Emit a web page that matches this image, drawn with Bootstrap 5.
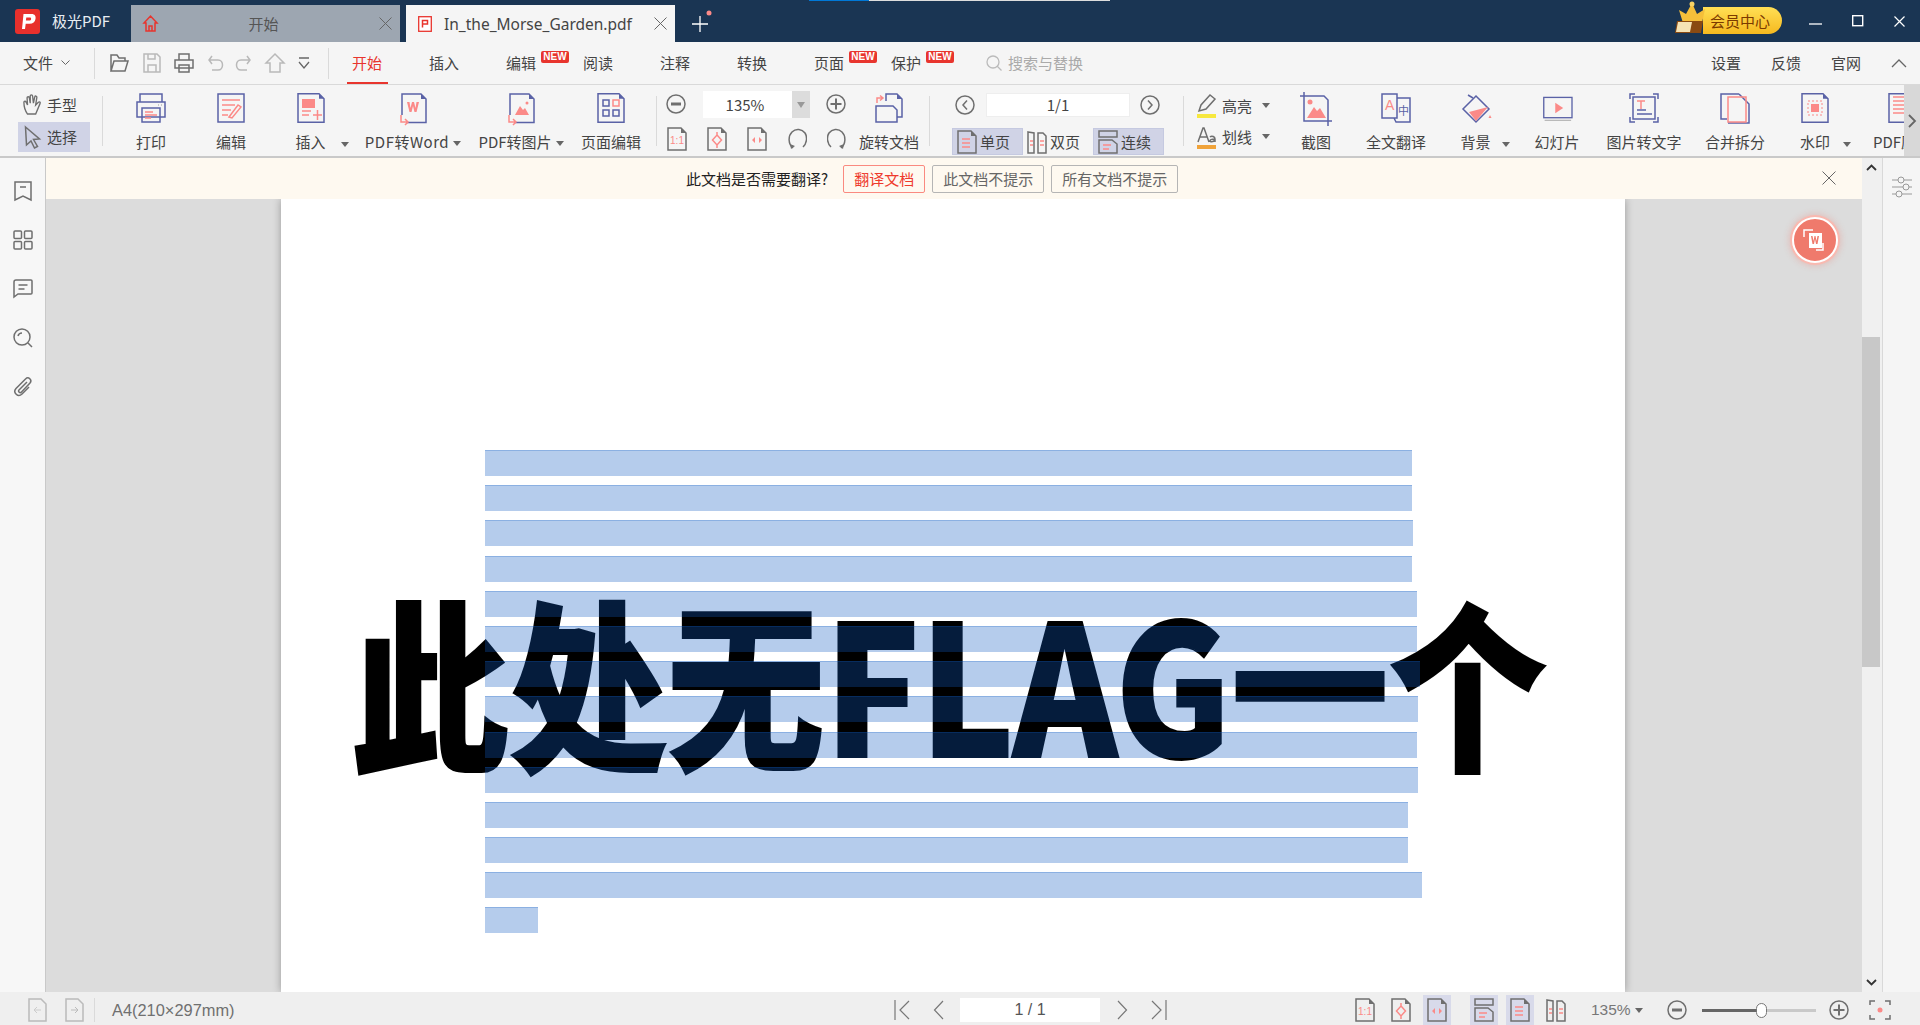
<!DOCTYPE html>
<html lang="zh-CN">
<head>
    <meta charset="UTF-8">
    <meta name="viewport" content="width=device-width, initial-scale=1.0">
    <title>极光PDF</title>
    <link rel="stylesheet" href="https://cdn.jsdelivr.net/npm/bootstrap@5.3.0/dist/css/bootstrap.min.css">
    <style>
        html, body { height: 100%; overflow: hidden; }
        body { font-family: "Noto Sans CJK SC", "Noto Sans", sans-serif; font-size: 15px; color: #444; background: #f5f5f5; line-height: 20px; }
        svg { display: block; flex: none; overflow: visible; }
        .s-n { fill: none; stroke: #5a62a6; stroke-width: 1.5; }
        .s-p { fill: none; stroke: #fb8a88; stroke-width: 1.5; }
        .s-g { fill: none; stroke: #6f6f6f; stroke-width: 1.5; }
        .s-l { fill: none; stroke: #b9b9b9; stroke-width: 1.5; }
        .f-n { fill: #5a62a6; }
        .f-p { fill: #fb8a88; }
        .f-g { fill: #6f6f6f; }
        .ico30 { width: 30px; height: 30px; }
        .ico20 { width: 20px; height: 24px; }

        .titlebar { height: 42px; background: #1a3553; color: #fff; }
        .loadline { position: absolute; left: 809px; top: 0; width: 301px; height: 1px; background: #ddd; }
        .loadline::before { content: ""; display: block; width: 60px; height: 1px; background: #0078d7; }
        .logo-box { width: 131px; padding-left: 15px; gap: 12px; }
        .app-name { font-size: 15px; color: #e8edf2; }
        .doc-tab { width: 269px; height: 37px; margin-top: 5px; padding: 0 8px 0 12px; }
        .tab-off { background: #9da6b1; color: #555; margin-right: 6px; }
        .tab-off-name { padding-right: 10px; }
        .tab-on { background: #f5f5f5; color: #444; }
        .tab-doc-name { font-family: "Noto Sans", sans-serif; font-size: 15.5px; margin-left: 12px; }
        .add-tab { margin-left: 17px; }
        .vip-pill { position: relative; width: 79px; height: 27px; margin-left: auto; margin-top: 7px; margin-right: 27px; background: linear-gradient(#ffdf55, #f6b91f); border-radius: 0 14px 14px 0; color: #7b3a00; padding-left: 7px; line-height: 27px; font-size: 15px; }
        .vip-crown { position: absolute; left: -28px; top: -6px; }
        .win-btns { gap: 30px; width: 96px; margin-right: 15px; }

        .menubar { height: 43px; border-bottom: 1px solid #d9d9d9; padding-left: 23px; }
        .file-menu { width: 71px; }
        .v-sep { width: 1px; background: #dadada; flex: none; }
        .menubar .v-sep { height: 31px; }
        .quick-btns { gap: 13.5px; margin: 0 18px 0 14px; }
        .nav-tabs-row { gap: 47px; margin-left: 23px; }
        .nav-item-txt { position: relative; width: 30px; white-space: nowrap; color: #444; }
        .nav-on { color: #e8352e; }
        .nav-on::after { content: ""; position: absolute; left: -5px; right: -6px; top: 29px; height: 2px; background: #e8352e; }
        .new-tag { position: absolute; left: 35px; top: -2px; width: 28px; height: 12px; background: #e8352e; border-radius: 2px; color: #fff; font: bold 10px/12px "Liberation Sans", sans-serif; text-align: center; }
        .find-box { margin-left: 65px; gap: 6px; color: #aaa; }
        .menu-right { margin-left: auto; gap: 30px; margin-right: 13px; }

        .toolbar { position: relative; height: 73px; border-bottom: 2px solid #c9c9c9; overflow: hidden; padding-left: 18px; }
        .toolbar > .v-sep { height: 50px; margin-top: 11px; }
        .mode-col { flex: none; width: 72px; margin-right: 12px; padding-top: 5px; }
        .mode-btn { height: 30px; gap: 5px; padding-left: 5px; }
        .mode-on { background: #d0d3e6; margin-top: 2px; }
        .tool-cell { position: relative; flex: none; padding-top: 8px; text-align: center; white-space: nowrap; }
        .tool-cell svg.ico30 { margin: 0 auto 9px; }
        .tool-label { display: block; line-height: 20px; }
        .label-wide { letter-spacing: .5px; }
        .drop-tri { display: inline-block; width: 0; height: 0; border: 4px solid transparent; border-top: 5px solid #666; border-bottom: 0; vertical-align: 2px; margin-left: 4px; }
        .tri-abs { position: absolute; top: 57px; margin-left: 0; }
        .tw80 { width: 80px; } .tw79 { width: 79px; } .tw118 { width: 118px; padding-left: 8px; } .tw106 { width: 106px; } .tw74 { width: 74px; }
        .tw84 { width: 84px; } .tw90 { width: 90px; } .tw92 { width: 92px; } .tw68 { width: 68px; } .tw64 { width: 64px; }
        .tool-after-sep { margin-left: 24px; }
        .zoom-col { flex: none; width: 191px; margin-left: 9px; padding-top: 5px; }
        .zoom-row { height: 28px; }
        .zoom-input { width: 107px; height: 27px; margin: 0 16px 0 17px; background: #fff; border-right: 18px solid #dcdcdc; text-align: center; line-height: 27px; position: relative; padding-right: 5px; }
        .zoom-input::after { content: ""; position: absolute; right: -13px; top: 11px; border: 4px solid transparent; border-top: 6px solid #999; border-bottom: 0; }
        .zoom-row2 { gap: 20px; margin-top: 9px; margin-left: 1px; }
        .page-col { flex: none; width: 253px; padding: 8px 0 0 25px; }
        .page-input { width: 144px; height: 24px; margin: 0 10px 0 11px; background: #fff; border: 1px solid #eee; text-align: center; line-height: 22px; }
        .view-row { margin: 11px 0 0 -3px; }
        .view-btn { height: 27px; gap: 3px; padding: 0 4px; width: 71px; }
        .view-on { background: #d0d3e6; border: 1px solid #c5c9e0; }
        .view-mid { width: 70px; }
        .mark-col { flex: none; width: 92px; padding: 5px 0 0 13px; }
        .mark-btn { gap: 6px; height: 31px; align-items: center; }
        .more-arrow { position: absolute; right: 0; top: 0; bottom: 0; width: 16px; background: #d8d8d8; display: flex; align-items: center; justify-content: center; }

        .work-area { min-height: 0; }
        .side-left { width: 46px; border-right: 1px solid #c9c9c9; background: #f7f7f7; padding-top: 23px; gap: 29px; }
        .trans-bar { height: 41px; background: #fef9f0; color: #222; position: relative; padding-left: 640px; }
        .trans-q { margin-right: 15px; white-space: nowrap; }
        .trans-btn { height: 28px; padding: 0 10px; margin-right: 7px; background: transparent; border: 1px solid #b5b5b5; border-radius: 2px; color: #666; font-size: 15px; line-height: 26px; white-space: nowrap; }
        .trans-red { border-color: #fa8a80; color: #ee3a2c; }
        .trans-close { position: absolute; right: 26px; top: 13px; }
        .doc-view { position: relative; min-height: 0; background: #dcdcdc; overflow: hidden; }
        .pdf-page { position: relative; width: 1344px; margin-left: 235px; height: 100%; background: #fff; box-shadow: 0 0 8px rgba(0,0,0,.3); padding: 251px 0 0 204px; }
        .big-line { position: absolute; left: 70px; top: 371px; font: 900 190px/228px "Noto Sans CJK SC", sans-serif; color: #000; white-space: nowrap; transform-origin: 0 0; transform: scale(.831, .955); -webkit-text-stroke: 2px #000; }
        .hl-bars { position: relative; gap: 9.2px; }
        .hl-bar { height: 26px; background: rgba(16, 90, 194, .31); border-top: 1px solid rgba(16, 90, 194, .25); }
        .float-btn { position: absolute; left: 1746px; top: 18px; width: 46px; height: 46px; border-radius: 50%; background: #ef7a6c; border: 2px solid #fff; box-shadow: 0 0 0 2px #f9b9b0, 0 0 6px 3px rgba(239,122,108,.3); display: flex; align-items: center; justify-content: center; }
        .v-scroll { width: 20px; background: #f0f0f0; position: relative; padding-top: 173px; }
        .v-thumb { height: 330px; background: #c8c8c8; margin: 6px 2px 0 0; }
        .scroll-up { position: absolute; top: 6px; left: 4px; }
        .scroll-down { position: absolute; bottom: 6px; left: 4px; }
        .side-right { width: 38px; background: #f5f5f5; border-left: 1px solid #d9d9d9; padding: 19px 0 0 9px; }

        .statusbar { height: 33px; padding-top: 3px; background: #efefef; color: #777; }
        .st-left { flex: none; width: 894px; padding-left: 28px; gap: 17px; }
        .st-left .v-sep { height: 24px; margin-left: -8px; }
        .st-size { font: 16.400px "Liberation Sans", sans-serif; color: #707070; }
        .st-pager { flex: none; width: 273px; }
        .st-gap22 { margin-left: 22px; }
        .st-gap16 { margin-left: 16px; }
        .st-input { width: 140px; height: 24px; margin-left: 15px; background: #fff; text-align: center; font: 16px/24px "Liberation Sans", sans-serif; color: #555; }
        .st-view { flex: none; margin-left: 188px; gap: 16px; }
        .st-on { background: #d8daea; padding: 4px; margin: -4px; height: 30px; display: flex; align-items: center; }
        .st-on-first { margin-left: 7px; }
        .st-zoom { flex: none; margin-left: 25px; width: 68px; font: 15.500px "Liberation Sans", sans-serif; color: #777; white-space: nowrap; }
        .st-track { position: relative; width: 114px; height: 3px; background: #c9c9c9; margin: 0 13px 0 15px; flex: none; }
        .st-fill { display: block; height: 3px; background: #666; }
        .st-knob { position: absolute; left: 54px; top: -6px; width: 11px; height: 15px; border-radius: 6px; background: #fff; border: 1px solid #777; }
        .st-fit { margin-left: 21px; }
    </style>
</head>
<body class="d-flex flex-column">

<svg width="0" height="0" class="position-absolute">
    <defs>
        <symbol id="doc27" viewBox="0 0 30 30"><path class="s-n" d="M2 .8h21l5 5v23.400H2z"/><path class="f-n" d="M23 .8l5 5h-5z"/></symbol>
        <symbol id="pg" viewBox="0 0 20 24"><path class="s-g" d="M1 1h13l5 5v17H1z" fill="#fff"/><path class="f-g" d="M14 1l5 5h-5z"/></symbol>
        <symbol id="pgOne" viewBox="0 0 20 24"><use href="#pg"/><text x="10" y="17" text-anchor="middle" font-size="10" font-family="Liberation Sans" fill="#fb8a88">1:1</text></symbol>
        <symbol id="pgFit" viewBox="0 0 20 24"><use href="#pg"/><path class="s-p" d="M10 8l4.500 5-4.500 5-4.500-5zM10 5v3M10 18v3"/></symbol>
        <symbol id="pgWide" viewBox="0 0 20 24"><use href="#pg"/><path class="f-p" d="M8 10v6l-3-3zM12 10v6l3-3z"/></symbol>
        <symbol id="rotL" viewBox="0 0 20 24"><path class="s-g" d="M6 21C1 17 1 9 5 5c4-4 10-3 13 1 2.500 4 2 10-2 14"/><path class="f-g" d="M3 17l5 2-4 3z"/></symbol>
        <symbol id="rotR" viewBox="0 0 20 24"><path class="s-g" d="M14 21c5-4 5-12 1-16-4-4-10-3-13 1-2.500 4-2 10 2 14"/><path class="f-g" d="M17 17l-5 2 4 3z"/></symbol>
        <symbol id="circMinus" viewBox="0 0 20 20"><circle class="s-g" cx="10" cy="10" r="9"/><path class="f-g" d="M5 8.500h10v3H5z"/></symbol>
        <symbol id="circPlus" viewBox="0 0 20 20"><circle class="s-g" cx="10" cy="10" r="9"/><path class="f-g" d="M4.500 9h11v2h-11zM9 4.500h2v11H9z"/></symbol>
        <symbol id="viewOne" viewBox="0 0 20 24"><use href="#pg"/><path class="s-p" d="M5 9h8M5 13h8M5 17h8"/></symbol>
        <symbol id="viewTwo" viewBox="0 0 20 24"><path class="s-g" d="M1 2l6 1v20H1zM11 3h5l3 3v17h-8z"/><path class="s-p" d="M3 11h3M3 15h3M13 11h4M13 15h4"/></symbol>
        <symbol id="viewCont" viewBox="0 0 20 24"><rect class="s-g" x="1" y="1" width="18" height="6"/><path class="s-g" d="M1 10h13l5 4v9H1z"/><path class="s-p" d="M5 15h8M5 19h6"/></symbol>
    </defs>
</svg>

<!-- title bar -->
<div class="titlebar d-flex position-relative flex-none">
    <div class="loadline"></div>
    <div class="logo-box d-flex align-items-center">
        <svg width="25" height="25" viewBox="0 0 25 25"><rect width="25" height="25" rx="3" fill="#e8302c"/><path d="M7 20l1.500-15h8c3.500 0 4.500 2.200 4 5-.5 3-2.500 4.800-6 4.800h-3.800L10 20z M11.300 8.600l-.4 2.900h3.200c1.200 0 1.900-.5 2-1.500.1-1-.4-1.400-1.500-1.400z" fill="#fff" fill-rule="evenodd"/></svg>
        <span class="app-name">极光PDF</span>
    </div>
    <div class="doc-tab tab-off d-flex align-items-center">
        <svg width="15" height="17" viewBox="0 0 15 17"><path d="M1 8l6.500-7L14 8h-2v8H3V8zM6 16v-5h3v5" fill="none" stroke="#e8352e" stroke-width="1.500"/></svg>
        <span class="tab-off-name flex-grow-1 text-center">开始</span>
        <svg width="13" height="13" viewBox="0 0 13 13"><path d="M.5.500l12 12M12.500.500l-12 12" stroke="#666" fill="none"/></svg>
    </div>
    <div class="doc-tab tab-on d-flex align-items-center">
        <svg width="14" height="16" viewBox="0 0 14 16"><rect x=".7" y=".7" width="12.600" height="14.600" fill="#fff" stroke="#e8352e" stroke-width="1.300"/><path d="M4.500 11.500v-7h5v3.500h-5" fill="none" stroke="#e8352e" stroke-width="1.500"/></svg>
        <span class="tab-doc-name flex-grow-1">In_the_Morse_Garden.pdf</span>
        <svg width="13" height="13" viewBox="0 0 13 13"><path d="M.5.500l12 12M12.500.500l-12 12" stroke="#666" fill="none"/></svg>
    </div>
    <svg class="add-tab align-self-center" width="20" height="24" viewBox="0 0 20 24"><path d="M8 7v16M0 15h16" stroke="#fff" fill="none" stroke-width="1.300"/><circle cx="17" cy="4" r="2.500" fill="#fb8a88"/></svg>
    <div class="vip-pill">
        <svg class="vip-crown" width="32" height="34" viewBox="0 0 32 34"><path d="M4 9l7 4 6-11 5 11 8-5-3 14H8z" fill="#f5bf3a"/><circle cx="17" cy="3" r="2.500" fill="#f8d365"/><path d="M2 20h26l-2 12H0z" fill="#8a4a12"/><path d="M3 21h14l-2 10H1z" fill="#f5e3b5"/></svg>
        会员中心
    </div>
    <div class="win-btns d-flex align-items-center">
        <svg width="13" height="13" viewBox="0 0 13 13"><path d="M0 9h13" stroke="#fff" stroke-width="1.300"/></svg>
        <svg width="12" height="12" viewBox="0 0 12 12"><rect x=".7" y=".7" width="10" height="10" fill="none" stroke="#fff" stroke-width="1.400"/></svg>
        <svg width="11" height="11" viewBox="0 0 11 11"><path d="M.5.500l10 10M10.500.500l-10 10" stroke="#fff" stroke-width="1.200"/></svg>
    </div>
</div>

<!-- menu bar -->
<div class="menubar d-flex align-items-center flex-none">
    <div class="file-menu d-flex align-items-center gap-2">
        <span>文件</span>
        <svg width="9" height="6" viewBox="0 0 9 6"><path d="M.5.500l4 4 4-4" fill="none" stroke="#666"/></svg>
    </div>
    <span class="v-sep"></span>
    <div class="quick-btns d-flex align-items-center">
        <svg width="20" height="20" viewBox="0 0 20 20"><path class="s-g" d="M2 18V2h6l2 3h6v3M2 18l3-10h14l-3 10z"/></svg>
        <svg width="18" height="20" viewBox="0 0 18 20"><path class="s-l" d="M1 1h13l3 3v15H1zM5 1v5h7V1M5 19v-7h8v7"/></svg>
        <svg width="20" height="20" viewBox="0 0 20 20"><path class="s-g" d="M5 7V1h10v6M1 7h18v8H1zM5 12h10v7H5z"/></svg>
        <svg width="15" height="18" viewBox="0 0 15 18"><path class="s-l" d="M1 6h9c6 0 6 10 0 10H4M4 2L1 6l3 4"/></svg>
        <svg width="15" height="18" viewBox="0 0 15 18"><path class="s-l" d="M14 6H5c-6 0-6 10 0 10h6M11 2l3 4-3 4"/></svg>
        <svg width="20" height="20" viewBox="0 0 20 20"><path class="s-l" d="M1 10l9-9 9 9h-4v9H5v-9z"/></svg>
        <svg width="12" height="12" viewBox="0 0 12 12"><path d="M1 1h10" stroke="#666" stroke-width="1.500"/><path d="M1 5l5 6 5-6" fill="none" stroke="#666" stroke-width="1.300"/></svg>
    </div>
    <span class="v-sep"></span>
    <div class="nav-tabs-row d-flex">
        <span class="nav-item-txt nav-on">开始</span>
        <span class="nav-item-txt">插入</span>
        <span class="nav-item-txt">编辑<span class="new-tag">NEW</span></span>
        <span class="nav-item-txt">阅读</span>
        <span class="nav-item-txt">注释</span>
        <span class="nav-item-txt">转换</span>
        <span class="nav-item-txt">页面<span class="new-tag">NEW</span></span>
        <span class="nav-item-txt">保护<span class="new-tag">NEW</span></span>
    </div>
    <div class="find-box d-flex align-items-center">
        <svg width="16" height="16" viewBox="0 0 16 16"><circle cx="7" cy="7" r="6" fill="none" stroke="#bbb" stroke-width="1.300"/><path d="M11 11l4.500 4.500" stroke="#bbb" stroke-width="1.300"/></svg>
        <span>搜索与替换</span>
    </div>
    <div class="menu-right d-flex align-items-center">
        <span>设置</span><span>反馈</span><span>官网</span>
        <svg width="16" height="9" viewBox="0 0 16 9"><path d="M1 8l7-7 7 7" fill="none" stroke="#666" stroke-width="1.300"/></svg>
    </div>
</div>

<!-- ribbon -->
<div class="toolbar d-flex flex-none">
    <div class="mode-col">
        <div class="mode-btn d-flex align-items-center">
            <svg width="19" height="22" viewBox="0 0 21 24"><path class="s-g" d="M5 22C2 18 1 13 1 9c0-1.500 2-1.500 2.500 0L5 12 4.500 4c0-1.500 2.500-1.500 2.500 0l1 6 0-8c0-1.500 2.500-1.500 2.600 0l.9 8 1.500-7c.4-1.500 2.500-1 2.300.5L14 12l3-3c1.300-1 2.600 0 1.800 1.500L14 22z"/></svg>
            <span>手型</span>
        </div>
        <div class="mode-btn mode-on d-flex align-items-center">
            <svg width="19" height="24" viewBox="0 0 18 24"><path class="s-g" d="M2 2l14 12-6 .5 4 7-3 1.500-3.500-7L3 20z" fill="#f5f5f5"/></svg>
            <span>选择</span>
        </div>
    </div>
    <span class="v-sep me-2"></span>

    <div class="tool-cell tw80">
        <svg class="ico30" viewBox="0 0 30 30"><path class="s-n" d="M4 9V1h22v8M1 9h28v15H1z"/><rect class="s-n" x="6" y="15" width="18" height="14" fill="#f5f5f5"/><path class="s-p" d="M9 19h8M9 22h12M9 25h6"/><path class="s-l" d="M22 12h1M25 12h1"/></svg>
        <span class="tool-label">打印</span>
    </div>
    <div class="tool-cell tw80">
        <svg class="ico30" viewBox="0 0 30 30"><rect class="s-n" x="2" y="1" width="26" height="28"/><path class="s-p" d="M6 7h18M6 12h13M6 17h9M6 22h6"/><path class="s-p" d="M13 24l9-12 3 2-9 11z"/></svg>
        <span class="tool-label">编辑</span>
    </div>
    <div class="tool-cell tw79">
        <svg class="ico30" viewBox="0 0 30 30"><use href="#doc27"/><rect class="f-p" x="6" y="6" width="13" height="9"/><path class="s-p" d="M6 18h9M6 22h7M17 22h9M21.500 17v10"/></svg>
        <span class="tool-label">插入</span>
        <span class="drop-tri tri-abs" style="left: 70px"></span>
    </div>
    <div class="tool-cell tw118">
        <svg class="ico30" viewBox="0 0 30 30"><path class="s-n" d="M4 22V1h19l5 5v23.500H8"/><path class="f-n" d="M23 1l5 5h-5z"/><path class="s-p" d="M3 22v7h6M7 26l3 3-3 3"/><path d="M9 9l2.500 10h2L15 13l1.500 6h2L21 9h-2.500l-1 6L16 9h-2l-1.500 6-1-6z" fill="#fb8a88"/></svg>
        <span class="tool-label label-wide">PDF转Word<span class="drop-tri"></span></span>
    </div>
    <div class="tool-cell tw106">
        <svg class="ico30" viewBox="0 0 30 30"><path class="s-n" d="M4 22V1h19l5 5v23.500H8"/><path class="f-n" d="M23 1l5 5h-5z"/><path class="s-p" d="M3 22v7h6M7 26l3 3-3 3"/><path class="f-p" d="M9 22l5-9 3 4 2-2 4 7z"/><circle class="f-p" cx="21" cy="10" r="1.500"/></svg>
        <span class="tool-label">PDF转图片<span class="drop-tri"></span></span>
    </div>
    <div class="tool-cell tw74">
        <svg class="ico30" viewBox="0 0 30 30"><use href="#doc27"/><rect class="s-n" x="7" y="7" width="6" height="6"/><rect class="s-p" x="17" y="7" width="6" height="6"/><rect class="s-n" x="7" y="17" width="6" height="6"/><rect class="s-n" x="17" y="17" width="6" height="6"/></svg>
        <span class="tool-label">页面编辑</span>
    </div>
    <span class="v-sep ms-2"></span>

    <div class="zoom-col">
        <div class="zoom-row d-flex align-items-center">
            <svg width="20" height="20" viewBox="0 0 20 20"><use href="#circMinus"/></svg>
            <div class="zoom-input">135%</div>
            <svg width="20" height="20" viewBox="0 0 20 20"><use href="#circPlus"/></svg>
        </div>
        <div class="zoom-row2 d-flex">
            <svg class="ico20"><use href="#pgOne"/></svg>
            <svg class="ico20"><use href="#pgFit"/></svg>
            <svg class="ico20"><use href="#pgWide"/></svg>
            <svg class="ico20"><use href="#rotL"/></svg>
            <svg class="ico20"><use href="#rotR"/></svg>
        </div>
    </div>
    <div class="tool-cell tw64">
        <svg class="ico30" viewBox="0 0 30 30"><path class="s-n" d="M12 8V1h11l5 5v18h-5"/><path class="f-n" d="M23 1l5 5h-5z"/><path class="s-n" d="M2 29V13h17l4 4v12z" fill="#f5f5f5"/><path class="s-p" d="M3 10V5h6M6 2.500L9 5 6 7.500"/></svg>
        <span class="tool-label">旋转文档</span>
    </div>
    <span class="v-sep ms-2"></span>

    <div class="page-col">
        <div class="d-flex align-items-center">
            <svg width="20" height="20" viewBox="0 0 20 20"><circle class="s-g" cx="10" cy="10" r="9"/><path class="s-g" d="M12 5.500L8 10l4 4.500"/></svg>
            <div class="page-input">1/1</div>
            <svg width="20" height="20" viewBox="0 0 20 20"><circle class="s-g" cx="10" cy="10" r="9"/><path class="s-g" d="M8 5.500l4 4.500-4 4.500"/></svg>
        </div>
        <div class="view-row d-flex">
            <div class="view-btn view-on d-flex align-items-center"><svg class="ico20"><use href="#viewOne"/></svg><span>单页</span></div>
            <div class="view-btn view-mid d-flex align-items-center"><svg class="ico20"><use href="#viewTwo"/></svg><span>双页</span></div>
            <div class="view-btn view-on d-flex align-items-center"><svg class="ico20"><use href="#viewCont"/></svg><span>连续</span></div>
        </div>
    </div>
    <span class="v-sep"></span>

    <div class="mark-col">
        <div class="mark-btn d-flex">
            <svg width="19" height="24" viewBox="0 0 19 24"><path class="s-g" d="M2 17l2-6 9-10 5 4-9 10z"/><path d="M0 20h19v4H0z" fill="#f7e83f"/></svg>
            <span>高亮</span><span class="drop-tri ms-1"></span>
        </div>
        <div class="mark-btn d-flex">
            <svg width="19" height="24" viewBox="0 0 19 24"><path class="s-g" d="M1 17L6 3h1l5 14M3 12h7M13 12c2-2 5 0 5 2v3M18 14c-3 0-5 1-5 2s3 1.500 5-1"/><path d="M0 20h19v4H0z" fill="#f0a33a"/></svg>
            <span>划线</span><span class="drop-tri ms-1"></span>
        </div>
    </div>

    <div class="tool-cell tw80">
        <svg class="ico30" viewBox="0 0 30 30"><path class="s-n" d="M-1 3h24l4 4v26M3-1v29h28"/><path class="f-p" d="M6 25l7-11 3 4 3-3 6 10z"/><circle class="f-p" cx="9" cy="9" r="2.500"/></svg>
        <span class="tool-label">截图</span>
    </div>
    <div class="tool-cell tw80">
        <svg class="ico30" viewBox="0 0 30 30"><path class="s-n" d="M1 1h15v24H1zM16 5h13v24H15l-2-4"/><text x="4" y="17" font-size="14" font-family="Liberation Sans" fill="#fb8a88">A</text><text x="17" y="22" font-size="11" fill="#5a62a6">中</text></svg>
        <span class="tool-label">全文翻译</span>
    </div>
    <div class="tool-cell tw79">
        <svg class="ico30" viewBox="0 0 30 30"><path class="s-n" d="M15 3l13 13-13 13L2 16z"/><path class="f-p" d="M8 19l19-5-12 14z"/><path class="s-n" d="M7 2l5 3"/><path class="f-p" d="M29 22l1.500 3h-3z"/></svg>
        <span class="tool-label">背景</span>
        <span class="drop-tri tri-abs" style="left: 66px"></span>
    </div>
    <div class="tool-cell tw84">
        <svg class="ico30" viewBox="-2 0 34 30"><rect class="s-n" x="0" y="3" width="32" height="23"/><path class="s-l" d="M1 29h30"/><path class="f-p" d="M13 9l9 6-9 6z"/></svg>
        <span class="tool-label">幻灯片</span>
    </div>
    <div class="tool-cell tw90">
        <svg class="ico30" viewBox="0 0 30 30"><path class="s-n" d="M1 6V1h5M24 1h5v5M1 24v5h5M29 24v5h-5"/><rect class="s-n" x="4" y="4" width="22" height="22"/><path class="s-p" d="M8 8h8M12 8v8"/><path class="s-n" d="M8 17h9M8 21h15"/></svg>
        <span class="tool-label">图片转文字</span>
    </div>
    <div class="tool-cell tw92">
        <svg class="ico30" viewBox="0 0 30 30"><path class="s-n" d="M19 1H1v25h6M19 1l10 10v19H8"/><rect class="s-p" x="8" y="4" width="18" height="25"/></svg>
        <span class="tool-label">合并拆分</span>
    </div>
    <div class="tool-cell tw68">
        <svg class="ico30" viewBox="0 0 30 30"><use href="#doc27"/><rect class="f-p" x="11" y="11" width="8" height="8"/><rect x="8" y="8" width="14" height="14" fill="none" stroke="#fb8a88" stroke-dasharray="2 2"/></svg>
        <span class="tool-label">水印</span>
        <span class="drop-tri tri-abs" style="left: 62px"></span>
    </div>
    <div class="tool-cell tool-after-sep">
        <svg class="ico30" viewBox="0 0 30 30"><use href="#doc27"/><path class="s-p" d="M6 4h14M6 8h14M6 12h14M6 16h14M6 20h14"/></svg>
        <span class="tool-label">PDF压缩</span>
    </div>
    <div class="more-arrow">
        <svg width="8" height="14" viewBox="0 0 8 14"><path d="M1 1l6 6-6 6" fill="none" stroke="#666" stroke-width="1.800"/></svg>
    </div>
</div>

<!-- work area -->
<div class="work-area d-flex flex-grow-1">
    <div class="side-left d-flex flex-column align-items-center flex-none">
        <svg width="20" height="20" viewBox="0 0 20 20"><path class="s-g" d="M2 1h16v18l-8-4-8 4zM7 6h6"/></svg>
        <svg width="20" height="20" viewBox="0 0 20 20"><rect class="s-g" x="1" y="1" width="7.500" height="7.500" rx="1"/><rect class="s-g" x="11.500" y="1" width="7.500" height="7.500" rx="1"/><rect class="s-g" x="1" y="11.500" width="7.500" height="7.500" rx="1"/><rect class="s-g" x="11.500" y="11.500" width="7.500" height="7.500" rx="1"/></svg>
        <svg width="20" height="20" viewBox="0 0 20 20"><path class="s-g" d="M3 1h15a1 1 0 0 1 1 1v12a1 1 0 0 1-1 1H5l-4 3V3a2 2 0 0 1 2-2zM5.500 6h9M5.500 10h6"/></svg>
        <svg width="20" height="20" viewBox="0 0 20 20"><circle class="s-g" cx="9" cy="9" r="8"/><path class="s-g" d="M15 15l4 4M5 8c.5-2 2-3 4-3"/></svg>
        <svg width="20" height="20" viewBox="0 0 20 20"><path class="s-g" d="M14 5l-8 8c-1.500 1.500 1 3.500 2.500 2l8.500-9c2.500-3-1.500-7-4.500-4L3 11.500c-3.500 4 2 9.500 6 5.500l7-7"/></svg>
    </div>
    <div class="d-flex flex-column flex-grow-1" style="min-width: 0">
        <div class="trans-bar d-flex align-items-center flex-none">
            <span class="trans-q">此文档是否需要翻译?</span>
            <button class="trans-btn trans-red">翻译文档</button>
            <button class="trans-btn">此文档不提示</button>
            <button class="trans-btn">所有文档不提示</button>
            <svg class="trans-close" width="14" height="14" viewBox="0 0 14 14"><path d="M.5.500l13 13M13.500.500l-13 13" stroke="#666" fill="none"/></svg>
        </div>
        <div class="doc-view flex-grow-1">
            <div class="pdf-page">
                <div class="big-line">此处无FLAG一个</div>
                <div class="hl-bars d-flex flex-column align-items-start" id="hlBars"></div>
            </div>
            <div class="float-btn">
                <svg width="28" height="28" viewBox="0 0 28 28"><path d="M3 11V4h9M22 17v7h-7" fill="none" stroke="#fff" stroke-width="1.500"/><rect x="8" y="7" width="13" height="15" fill="#fff"/><path d="M10 10l1.500 8h1.500l1-5 1 5h1.500l1.500-8h-1.500l-1 5-1-5h-1l-1 5-1-5z" fill="#ef7a6c"/></svg>
            </div>
        </div>
    </div>
    <div class="v-scroll flex-none">
        <svg class="scroll-up" width="11" height="7" viewBox="0 0 11 7"><path d="M1 6l4.500-4.500L10 6" fill="none" stroke="#333" stroke-width="1.800"/></svg>
        <div class="v-thumb"></div>
        <svg class="scroll-down" width="11" height="7" viewBox="0 0 11 7"><path d="M1 1l4.500 4.500L10 1" fill="none" stroke="#333" stroke-width="1.800"/></svg>
    </div>
    <div class="side-right flex-none">
        <svg width="20" height="20" viewBox="0 0 20 20"><path d="M0 3h6M12 3h8M0 10h11M17 10h3M0 17h4M10 17h10" stroke="#999" fill="none"/><circle cx="9" cy="3" r="3" fill="none" stroke="#999"/><circle cx="14" cy="10" r="3" fill="none" stroke="#999"/><circle cx="7" cy="17" r="3" fill="none" stroke="#999"/></svg>
    </div>
</div>

<!-- status bar -->
<div class="statusbar d-flex align-items-center flex-none">
    <div class="st-left d-flex align-items-center">
        <svg class="ico20"><path d="M1 1h12l5 5v17H1z" fill="none" stroke="#bbb" stroke-width="1.500"/><path d="M13 12H6M9 9l-3 3 3 3" fill="none" stroke="#ccc"/></svg>
        <svg class="ico20"><path d="M1 1h12l5 5v17H1z" fill="none" stroke="#bbb" stroke-width="1.500"/><path d="M6 12h7M10 9l3 3-3 3" fill="none" stroke="#bbb"/></svg>
        <span class="v-sep"></span>
        <span class="st-size">A4(210×297mm)</span>
    </div>
    <div class="st-pager d-flex align-items-center">
        <svg width="17" height="20" viewBox="0 0 17 20"><path d="M1 0v20M15 1L6 10l9 9" fill="none" stroke="#777" stroke-width="1.200"/></svg>
        <svg class="st-gap22" width="12" height="20" viewBox="0 0 12 20"><path d="M10 1L1.500 10l8.500 9" fill="none" stroke="#777" stroke-width="1.200"/></svg>
        <div class="st-input">1 / 1</div>
        <svg class="st-gap16" width="12" height="20" viewBox="0 0 12 20"><path d="M2 1l8.500 9L2 19" fill="none" stroke="#777" stroke-width="1.200"/></svg>
        <svg class="st-gap22" width="17" height="20" viewBox="0 0 17 20"><path d="M16 0v20M2 1l9 9-9 9" fill="none" stroke="#777" stroke-width="1.200"/></svg>
    </div>
    <div class="st-view d-flex align-items-center">
        <svg class="ico20"><use href="#pgOne"/></svg>
        <svg class="ico20"><use href="#pgFit"/></svg>
        <span class="st-on"><svg class="ico20"><use href="#pgWide"/></svg></span>
        <span class="st-on st-on-first"><svg class="ico20"><use href="#viewCont"/></svg></span>
        <span class="st-on"><svg class="ico20"><use href="#viewOne"/></svg></span>
        <svg class="ico20"><use href="#viewTwo"/></svg>
    </div>
    <span class="st-zoom">135%<span class="drop-tri"></span></span>
    <svg width="20" height="20" viewBox="0 0 20 20" class="ms-2"><use href="#circMinus"/></svg>
    <div class="st-track"><span class="st-fill" style="width: 60px"></span><span class="st-knob"></span></div>
    <svg width="20" height="20" viewBox="0 0 20 20"><use href="#circPlus"/></svg>
    <svg class="st-fit" width="20" height="20" viewBox="0 0 20 20"><path class="s-g" d="M0 5V1h5M15 1h5v4M0 15v4h5M20 15v4h-5"/><circle class="f-p" cx="10" cy="10" r="2.500"/></svg>
</div>

<script src="https://cdn.jsdelivr.net/npm/bootstrap@5.3.0/dist/js/bootstrap.bundle.min.js"></script>
<script>
    // selection rectangles on the page, width of each text line
    const lineWidths = [927, 927, 928, 927, 932, 932, 935, 933, 932, 933, 923, 923, 937, 53];
    document.getElementById('hlBars').innerHTML = lineWidths
        .map(w => `<div class="hl-bar" style="width: ${w}px"></div>`)
        .join('');
</script>
</body>
</html>
